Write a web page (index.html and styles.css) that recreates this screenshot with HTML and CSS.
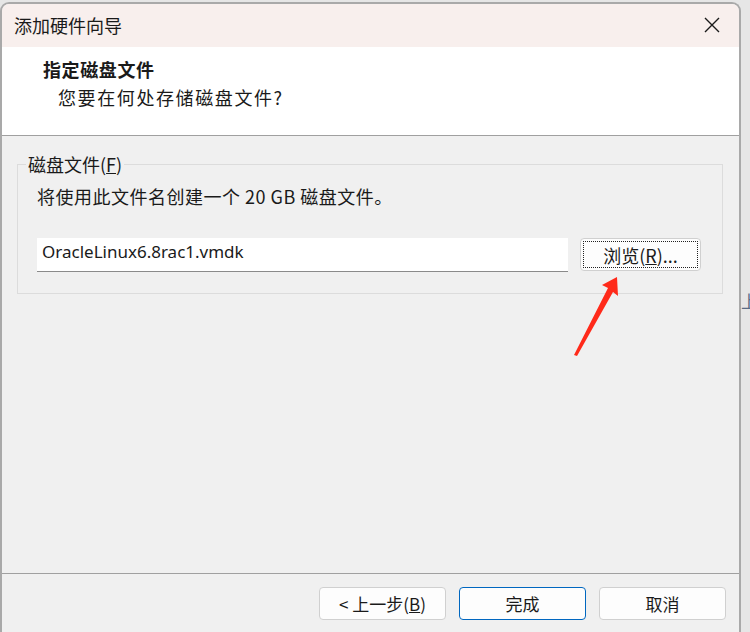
FILE: index.html
```html
<!DOCTYPE html>
<html>
<head>
    <title>添加硬件向导</title>
    <link rel="stylesheet" href="styles.css">
</head>
<body>
    <div class="dialog">
        <div class="titlebar">
            <span class="title">添加硬件向导</span>
            <svg class="close" width="16" height="16" viewBox="0 0 16 16">
                <path d="M1 1 L15 15 M15 1 L1 15" stroke="#1a1a1a" stroke-width="1.4" fill="none"/>
            </svg>
        </div>

        <div class="header">
            <div class="header-title">指定磁盘文件</div>
            <div class="header-sub">您要在何处存储磁盘文件?</div>
        </div>

        <div class="content">
            <fieldset class="group">
                <legend>磁盘文件(<u>F</u>)</legend>
                <p class="note">将使用此文件名创建一个 20 GB 磁盘文件。</p>
                <div class="file-row">
                    <div class="file-input">OracleLinux6.8rac1.vmdk</div>
                    <button class="btn browse"><span class="focus">浏览(<u>R</u>)...</span></button>
                </div>
            </fieldset>
        </div>

        <div class="footer">
            <button class="btn">&lt;&nbsp;上一步(<u>B</u>)</button>
            <button class="btn primary">完成</button>
            <button class="btn">取消</button>
        </div>
    </div>

    <div class="behind"><span>上</span></div>

    <!-- red annotation arrow drawn over the dialog -->
    <svg class="arrow" width="70" height="95" viewBox="0 0 70 95">
        <polygon points="57,7 58,26 53,22 17,86 14,85 48,18 42,15" fill="#ff2a1a"/>
    </svg>
</body>
</html>
```

FILE: styles.css
```css
body {
    margin: 0;
    background: #e6e6e6;
    font-family: "Noto Sans CJK SC", "Noto Sans", sans-serif;
    color: #1a1a1a;
    width: 750px;
    height: 632px;
    overflow: hidden;
    position: relative;
}

.dialog {
    position: relative;
    margin-top: 2px;
    width: 737px;
    height: 640px;
    border: 2px solid #a9a9a9;
    border-bottom: none;
    border-radius: 9px 9px 0 0;
    background: #f0f0f0;
    overflow: hidden;
    display: flex;
    flex-direction: column;
}

.titlebar {
    height: 43px;
    background: #f8efed;
    display: flex;
    align-items: center;
    justify-content: space-between;
    padding: 0 19px 0 12px;
}

.title {
    font-size: 18px;
    line-height: 20px;
    margin-top: -2px;
}

.close {
    margin-top: -2px;
}

.header {
    height: 89px;
    background: #fff;
    border-bottom: 1px solid #a0a0a0;
    box-sizing: border-box;
    padding: 11px 0 0 41px;
}

.header-title {
    font-size: 18px;
    font-weight: bold;
    line-height: 22px;
    letter-spacing: 0.6px;
}

.header-sub {
    font-size: 18px;
    line-height: 22px;
    margin: 6px 0 0 15px;
    letter-spacing: 1.6px;
}

.content {
    position: relative;
    height: 438px;
    border-bottom: 1px solid #a0a0a0;
    box-sizing: border-box;
    padding: 17px 16px 0 15px;
}

.group {
    margin: 0;
    height: 141px;
    box-sizing: border-box;
    border: 1px solid #dcdcdc;
    padding: 0 20px 0 19px;
}

.group legend {
    font-size: 18px;
    line-height: 22px;
    padding: 0 2px;
    margin-left: -11px;
    color: #1a1a1a;
}

.note {
    font-size: 18px;
    line-height: 22px;
    margin: 10px 0 0 0;
    letter-spacing: 0.5px;
}

.file-row {
    display: flex;
    gap: 12px;
    margin-top: 31px;
}

.file-input {
    width: 531px;
    height: 34px;
    box-sizing: border-box;
    background: #fff;
    border-bottom: 1px solid #8a8a8a;
    padding: 2px 0 0 5px;
    font-family: "Noto Sans", sans-serif;
    font-size: 17px;
    line-height: 24px;
}

.btn {
    font-family: "Noto Sans CJK SC", "Noto Sans", sans-serif;
    font-size: 17px;
    color: #1a1a1a;
    background: #fdfdfd;
    border: 1px solid #d0d0d0;
    border-radius: 4px;
    height: 33px;
    width: 127px;
    padding: 0;
    cursor: pointer;
}

.browse {
    width: 121px;
    padding: 2px;
    font-size: 18px;
}

.focus {
    display: flex;
    align-items: center;
    justify-content: center;
    height: 100%;
    border: 1px dotted #222;
    box-sizing: border-box;
}

.footer {
    display: flex;
    justify-content: flex-end;
    gap: 13px;
    padding: 13px 13px 0 0;
}

.primary {
    border: 1px solid #0067c0;
}

.behind {
    position: absolute;
    left: 741px;
    top: 290px;
    width: 9px;
    overflow: hidden;
    white-space: nowrap;
    font-size: 17px;
    line-height: 22px;
    color: #5a6c86;
}

.arrow {
    position: absolute;
    left: 560px;
    top: 270px;
}
```
